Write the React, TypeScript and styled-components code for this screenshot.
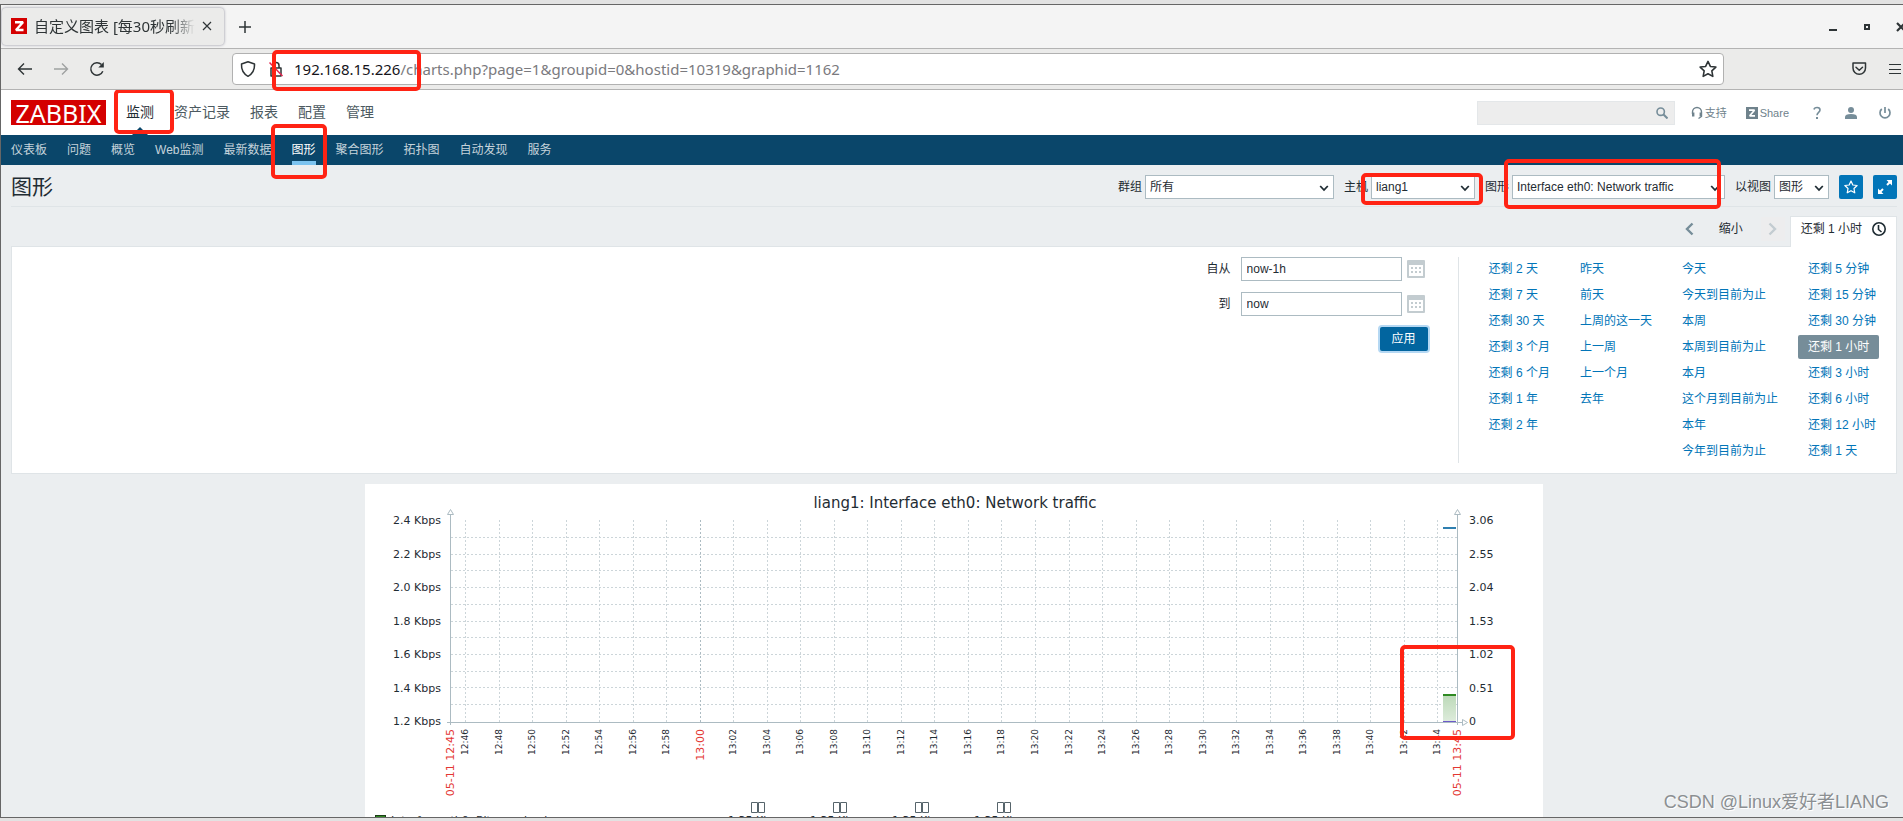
import React from "react";
import styled, { createGlobalStyle, css } from "styled-components";

const sans = '"Liberation Sans", "Noto Sans CJK SC", sans-serif';
const browserSans = '"Noto Sans", "Noto Sans CJK SC", sans-serif';
const chartSans = '"DejaVu Sans", "Noto Sans CJK SC", sans-serif';

const GlobalStyle = createGlobalStyle`
  *, *::before, *::after { box-sizing: border-box; }
  body { margin: 0; background: #ebebeb; }
  button, input, select { font: inherit; color: inherit; margin: 0; }
  svg { display: block; flex: none; }
`;

/* ---------- window ---------- */

const Desktop = styled.div`
  position: relative;
  height: 100vh;
  padding: 4px 0 3px;
  background: #e2e2e2;
  overflow: hidden;
  font: 12px/16px ${sans};
  color: #1f2c33;
`;

const Window = styled.div`
  height: 100%;
  display: flex;
  flex-direction: column;
  overflow: hidden;
  border: solid #666;
  border-width: 1px 0 1px 1px;
`;

const TabStrip = styled.div`
  flex: none;
  height: 44px;
  display: flex;
  align-items: center;
  gap: 15px;
  padding: 0 0 0 1px;
  background: #f4f4f4;
  border-bottom: 1px solid #b3b3b3;
  overflow: hidden;
`;

const BrowserTab = styled.div`
  width: 222px;
  height: 37px;
  display: flex;
  align-items: center;
  gap: 7px;
  padding: 0 12px 2px 9px;
  border-radius: 4px;
  background: #ebebea;
  box-shadow: 0 0 3px #8a8a99;
  color: #2e3436;
  font: 15px/20px ${browserSans};
`;

const TabTitle = styled.span`
  flex: 1;
  min-width: 0;
  overflow: hidden;
  white-space: nowrap;
  mask-image: linear-gradient(90deg, #000 85%, transparent);
`;

const PlainButton = styled.button<{ $faded?: boolean }>`
  padding: 0;
  border: 0;
  background: none;
  display: flex;
  color: #2e3436;
  opacity: ${(p) => (p.$faded ? 0.4 : 1)};
`;

const WindowButtons = styled.div`
  margin-left: auto;
  margin-right: -4px;
  display: flex;
  gap: 22px;
`;

const Toolbar = styled.div`
  flex: none;
  height: 41px;
  display: grid;
  grid-template-columns: 231px minmax(0, 1fr) 179px;
  align-items: center;
  background: #ebebea;
  border-bottom: 1px solid #b3b3b3;
`;

const NavButtons = styled.div`
  display: flex;
  gap: 20px;
  padding-left: 16px;
`;

const UrlBox = styled.div`
  position: relative;
  height: 32px;
  display: flex;
  align-items: center;
  padding: 0 6px;
  background: #fff;
  border: 1px solid #b1b1b1;
  border-radius: 4px;
  font: 15px/20px ${browserSans};
  color: #7a7a7e;
`;

const UrlIcons = styled.div`
  display: flex;
  gap: 10px;
  margin-right: 9px;
`;

const UrlHost = styled.label`
  color: #15141a;
`;

const UrlInput = styled.input`
  flex: 1;
  min-width: 0;
  border: 0;
  padding: 0;
  outline: 0;
  background: none;
`;

const ToolButtons = styled.div`
  display: flex;
  justify-content: flex-end;
  gap: 20px;
`;

/* Red frame that points at a part of the page */
const Mark = styled.span<{ $x: number; $y: number; $w: number; $h: number }>`
  position: absolute;
  z-index: 5;
  left: ${(p) => p.$x}px;
  top: ${(p) => p.$y}px;
  width: ${(p) => p.$w}px;
  height: ${(p) => p.$h}px;
  border: 4px solid #ff2314;
  border-radius: 5px;
  pointer-events: none;
`;

/* ---------- Zabbix header ---------- */

const Page = styled.div`
  flex: 1;
  min-height: 0;
  overflow: hidden;
  background: #ebeef0;
`;

const Header = styled.header`
  height: 45px;
  display: flex;
  align-items: center;
  padding: 0 12px 0 10px;
  background: #fff;
`;

const Logo = styled.a`
  width: 95px;
  height: 25px;
  margin-right: 20px;
  background: #d40000;
  color: #fff;
  text-align: center;
  text-decoration: none;
  font: 25px/26px ${browserSans};
`;

const MainMenu = styled.nav`
  display: flex;
  gap: 20px;
`;

const MainLink = styled.a<{ $active?: boolean }>`
  position: relative;
  height: 45px;
  font-size: 14px;
  line-height: 45px;
  text-decoration: none;
  color: ${(p) => (p.$active ? "#1f2c33" : "#4c5a61")};
  ${(p) =>
    p.$active &&
    css`
      &::after {
        content: "";
        position: absolute;
        left: 50%;
        bottom: 0;
        margin-left: -8px;
        border: 8px solid transparent;
        border-top-width: 0;
        border-bottom-color: #0a466a;
      }
    `}
`;

const HeaderTools = styled.div`
  margin-left: auto;
  display: flex;
  align-items: center;
  gap: 22px;
  color: #6f828c;
`;

const SearchForm = styled.form`
  width: 198px;
  height: 24px;
  margin-right: -3px;
  display: flex;
  align-items: center;
  padding-right: 6px;
  background: #ededed;
  border: 1px solid #e4e7e9;
`;

const SearchInput = styled.input`
  flex: 1;
  min-width: 0;
  border: 0;
  background: none;
  outline: 0;
`;

const IconButton = styled(PlainButton)`
  color: #768d99;
`;

const HeaderLink = styled.a`
  display: flex;
  align-items: center;
  gap: 2px;
  margin-left: -3px;
  font-size: 11px;
  color: inherit;
  text-decoration: none;
`;

const SubMenu = styled.nav`
  height: 30px;
  display: flex;
  gap: 20px;
  padding: 0 10px;
  background: #0a466a;
`;

const SubLink = styled.a<{ $active?: boolean }>`
  position: relative;
  line-height: 31px;
  text-decoration: none;
  color: ${(p) => (p.$active ? "#fff" : "#c5d3db")};
  box-shadow: ${(p) => (p.$active ? "inset 0 -4px #7bc3f0" : "none")};
`;

/* ---------- page title and filters ---------- */

const Content = styled.main`
  padding: 0 6px 0 10px;
`;

const TitleRow = styled.div`
  height: 42px;
  display: flex;
  align-items: center;
  justify-content: space-between;
  padding-top: 3px;
  border-bottom: 1px solid #dfe4e7;
`;

const Title = styled.h1`
  margin: 0;
  font-weight: 400;
  font-size: 21px;
  line-height: 24px;
`;

const Controls = styled.div`
  display: flex;
  align-items: center;
  gap: 10px;
`;

const Field = styled.label`
  display: flex;
  align-items: center;
  gap: 3px;
`;

const SelectBox = styled.span<{ $w: number }>`
  position: relative;
  width: ${(p) => p.$w}px;
  height: 24px;

  > svg {
    position: absolute;
    right: 5px;
    top: 8px;
    pointer-events: none;
  }
`;

const Select = styled.select`
  appearance: none;
  width: 100%;
  height: 24px;
  padding: 0 4px;
  border: 1px solid #acbbc2;
  border-radius: 0;
  background: #fff;
`;

const BlueButton = styled.button`
  width: 24px;
  height: 24px;
  display: flex;
  align-items: center;
  justify-content: center;
  padding: 0;
  border: 0;
  border-radius: 2px;
  background: #0275b8;
  color: #fff;
`;

const TimeBar = styled.div`
  height: 39px;
  display: flex;
  align-items: flex-end;
  justify-content: flex-end;
`;

const StepButton = styled.button<{ $off?: boolean }>`
  width: 24px;
  height: 24px;
  margin: 0 0 5px;
  display: flex;
  align-items: center;
  justify-content: center;
  padding: 0;
  border: 0;
  background: ${(p) => (p.$off ? "#ededee" : "none")};
  color: ${(p) => (p.$off ? "#c3ccd1" : "#768d99")};
`;

const ZoomOut = styled(StepButton)`
  margin: 0 18px 5px;
  color: #1f2c33;
`;

const TimeTab = styled.a`
  position: relative;
  height: 31px;
  display: flex;
  align-items: center;
  gap: 10px;
  margin: 0 0 -1px 5px;
  padding: 0 10px 6px;
  background: #fff;
  border: 1px solid #dfe4e7;
  border-bottom: 0;
  color: inherit;
  text-decoration: none;
`;

const Panel = styled.section`
  display: flex;
  justify-content: flex-end;
  padding: 10px;
  background: #fff;
  border: 1px solid #dfe4e7;
`;

const RangeForm = styled.form`
  display: grid;
  grid-template-columns: auto 161px 18px;
  column-gap: 5px;
  row-gap: 11px;
  align-content: start;
  align-items: center;
  padding-right: 33px;
`;

const RangeLabel = styled.label`
  text-align: right;
  margin-right: 5px;
`;

const RangeInput = styled.input`
  width: 161px;
  height: 24px;
  padding: 0 5px;
  border: 1px solid #acbbc2;
`;

const ApplyButton = styled.button`
  grid-column: 1 / -1;
  justify-self: end;
  width: 48px;
  height: 24px;
  margin-right: -3px;
  border: 0;
  padding: 0;
  border-radius: 2px;
  background: #02659f;
  box-shadow: 0 0 0 2px #b5d8f3;
  color: #fff;
`;

const Presets = styled.div`
  display: flex;
  gap: 10px;
  padding-left: 20px;
  border-left: 1px solid #dfe4e7;
`;

const PresetList = styled.ul`
  margin: 0;
  padding: 0;
  list-style: none;
  display: flex;
  flex-direction: column;
  align-items: flex-start;
  gap: 2px;
`;

const Preset = styled.a<{ $active?: boolean }>`
  display: block;
  height: 24px;
  padding: 0 10px;
  border-radius: 2px;
  line-height: 24px;
  white-space: nowrap;
  text-decoration: none;
  color: ${(p) => (p.$active ? "#fff" : "#0275b8")};
  background: ${(p) => (p.$active ? "#768d99" : "none")};
`;

const ChartBox = styled.figure`
  position: relative;
  width: 1178px;
  margin: 10px auto 0;
  background: #fff;
`;

const Watermark = styled.div`
  position: absolute;
  right: 14px;
  bottom: 7px;
  font: 18px/24px ${sans};
  color: #8b8f92;
  text-shadow: 1px 1px 0 #fff;
`;

/* ---------- icons ---------- */

const line = { fill: "none", stroke: "currentColor" } as const;

const Chevron = () => (
  <svg width="10" height="10" viewBox="0 0 10 10" {...line} strokeWidth="1.8">
    <path d="M1.2 3 5 7l3.8-4" />
  </svg>
);

const STAR = "m8 1.2 2.1 4.5 4.9.6-3.6 3.4.9 4.900L8 12.200l-4.300 2.400.9-4.900L1 6.300l4.900-.6z";

const Star = ({ size }: { size: number }) => (
  <svg width={size} height={size} viewBox="0 0 16 16" {...line} strokeWidth="1.4" strokeLinejoin="round">
    <path d={STAR} />
  </svg>
);

const Calendar = () => (
  <svg width="18" height="18" viewBox="0 0 18 18">
    <rect width="18" height="18" rx="1" fill="#c3ccd0" />
    <rect x="2" y="5" width="14" height="11" fill="#fff" />
    {[4, 8, 12].map((x) => [7, 11].map((y) => <rect key={`${x}-${y}`} x={x} y={y} width="2" height="2" fill="#c3ccd0" />))}
  </svg>
);

/* ---------- data ---------- */

const subMenu = ["仪表板", "问题", "概览", "Web监测", "最新数据", "图形", "聚合图形", "拓扑图", "自动发现", "服务"];

const presets = [
  ["还剩 2 天", "还剩 7 天", "还剩 30 天", "还剩 3 个月", "还剩 6 个月", "还剩 1 年", "还剩 2 年"],
  ["昨天", "前天", "上周的这一天", "上一周", "上一个月", "去年"],
  ["今天", "今天到目前为止", "本周", "本周到目前为止", "本月", "这个月到目前为止", "本年", "今年到目前为止"],
  ["还剩 5 分钟", "还剩 15 分钟", "还剩 30 分钟", "还剩 1 小时", "还剩 3 小时", "还剩 6 小时", "还剩 12 小时", "还剩 1 天"],
];

const leftScale = ["2.4 Kbps", "2.2 Kbps", "2.0 Kbps", "1.8 Kbps", "1.6 Kbps", "1.4 Kbps", "1.2 Kbps"];
const rightScale = ["3.06", "2.55", "2.04", "1.53", "1.02", "0.51", "0"];

const timeTicks = Array.from({ length: 30 }, (_, i) => {
  const minute = 46 + i * 2;
  const hour = 12 + Math.floor(minute / 60);
  return {
    x: 100.5 + Math.round(i * 33.53),
    label: `${hour}:${String(minute % 60).padStart(2, "0")}`,
    major: minute % 60 === 0,
  };
});

/* ---------- chart ---------- */

const TimeLabel = ({ x, text, major }: { x: number; text: string; major?: boolean }) => (
  <text
    transform={`translate(${Math.floor(x) + (major ? 4 : 3)} 245) rotate(-90)`}
    textAnchor="end"
    fontSize={major ? 11 : 9}
    fill={major ? "#e33734" : "#1f2c33"}
  >
    {text}
  </text>
);

const Chart = () => (
  <svg width="1178" height="350" viewBox="0 0 1178 350" fontFamily={chartSans} fontSize="11" fill="#1f2c33">
    <defs>
      <linearGradient id="bits" x1="0" y1="0" x2="0" y2="1">
        <stop offset="0" stopColor="#bcd9b8" />
        <stop offset="1" stopColor="#deecdc" />
      </linearGradient>
    </defs>
    <text x="590" y="24" fontSize="15" textAnchor="middle">
      liang1: Interface eth0: Network traffic
    </text>
    <g stroke="#ccd5d9" strokeDasharray="2 2">
      {Array.from({ length: 11 }, (_, i) => {
        const y = Math.round(53 + i * 16.7) + 0.5;
        return <line key={i} x1="86" x2="1092" y1={y} y2={y} />;
      })}
      {timeTicks.map((t) => (
        <line key={t.label} x1={t.x} x2={t.x} y1="36" y2="238" stroke={t.major ? "#acbbc2" : undefined} />
      ))}
    </g>
    <rect x="1078" y="211" width="13" height="27" fill="url(#bits)" />
    <rect x="1078" y="210" width="13" height="2" fill="#2f8a22" />
    <rect x="1078" y="237" width="13" height="1" fill="#6c59c9" />
    <rect x="1078" y="43" width="13" height="2" fill="#2f7fb0" />
    <g fill="none" stroke="#acbbc2">
      <path d="M85.500 31V241M1092.500 31V241M82 238.500H1097" />
      <path fill="#fff" d="M82.500 30.500h6l-3-5zM1089.500 30.500h6l-3-5zM1097.500 235.500v6l5-3z" />
    </g>
    {leftScale.map((s, i) => (
      <text key={s} x="76" y={Math.round(40 + i * 33.5)} textAnchor="end">
        {s}
      </text>
    ))}
    {rightScale.map((s, i) => (
      <text key={s} x="1104" y={Math.round(40 + i * 33.5)}>
        {s}
      </text>
    ))}
    <TimeLabel x={85} text="05-11 12:45" major />
    {timeTicks.map((t) => (
      <TimeLabel key={t.label} x={t.x} text={t.label} major={t.major} />
    ))}
    <TimeLabel x={1092} text="05-11 13:45" major />
    <rect x="10.500" y="331.500" width="10" height="10" fill="#2f8a22" stroke="#1b3d16" />
    <text x="26" y="340">
      Interface eth0: Bits received
    </text>
    {[386, 468, 550, 632].map((x) => (
      <g key={x}>
        <path d={`M${x + 0.5} 318.500h6v10h-6zM${x + 7.5} 318.500h6v10h-6z`} fill="none" stroke="#56646b" />
        <text x={x + 32} y="340" textAnchor="end">
          1.35 Kbps
        </text>
      </g>
    ))}
  </svg>
);

/* ---------- page ---------- */

export default function App() {
  return (
    <Desktop>
      <GlobalStyle />
      <Window>
        <TabStrip>
          <BrowserTab>
            <svg width="16" height="16" viewBox="0 0 16 16">
              <rect width="16" height="16" fill="#d40000" />
              <path d="M4 4.200h8L5 12h7.500" fill="none" stroke="#fff" strokeWidth="2.400" strokeLinejoin="bevel" />
            </svg>
            <TabTitle>自定义图表 [每30秒刷新一次]</TabTitle>
            <PlainButton aria-label="关闭标签页">
              <svg width="10" height="10" viewBox="0 0 10 10" {...line} strokeWidth="1.200">
                <path d="m1 1 8 8M9 1 1 9" />
              </svg>
            </PlainButton>
          </BrowserTab>
          <PlainButton aria-label="新标签页">
            <svg width="12" height="12" viewBox="0 0 12 12" {...line} strokeWidth="1.500">
              <path d="M6 0v12M0 6h12" />
            </svg>
          </PlainButton>
          <WindowButtons>
            <PlainButton aria-label="最小化">
              <svg width="12" height="12" viewBox="0 0 12 12">
                <rect x="2" y="8" width="8" height="2" fill="currentColor" />
              </svg>
            </PlainButton>
            <PlainButton aria-label="最大化">
              <svg width="12" height="12" viewBox="0 0 12 12" {...line} strokeWidth="2">
                <path d="M4 4h4v4H4z" />
              </svg>
            </PlainButton>
            <PlainButton aria-label="关闭">
              <svg width="12" height="12" viewBox="0 0 12 12" {...line} strokeWidth="2.200">
                <path d="m2 2 8 8M10 2l-8 8" />
              </svg>
            </PlainButton>
          </WindowButtons>
        </TabStrip>

        <Toolbar>
          <NavButtons>
            <PlainButton aria-label="后退">
              <svg width="16" height="16" viewBox="0 0 16 16" {...line} strokeWidth="1.400">
                <path d="M15 8H1.500M7 2.500 1.500 8 7 13.500" />
              </svg>
            </PlainButton>
            <PlainButton aria-label="前进" $faded>
              <svg width="16" height="16" viewBox="0 0 16 16" {...line} strokeWidth="1.400">
                <path d="M1 8h13.500M9 2.500 14.500 8 9 13.500" />
              </svg>
            </PlainButton>
            <PlainButton aria-label="刷新">
              <svg width="16" height="16" viewBox="0 0 16 16" {...line} strokeWidth="1.500">
                <path d="M13.800 10.200A6.200 6.200 0 1 1 12.500 3.600" />
                <path d="M14.800 1v5.500H9.300z" fill="currentColor" stroke="none" />
              </svg>
            </PlainButton>
          </NavButtons>
          <UrlBox>
            <UrlIcons>
              <svg width="18" height="18" viewBox="0 0 18 18" {...line} strokeWidth="1.500" color="#2e3436">
                <path d="M9 1.800 15.500 4c.3 5.500-1.500 9.500-6.500 12.300C4 13.500 2.200 9.500 2.500 4z" strokeLinejoin="round" />
              </svg>
              <svg width="18" height="18" viewBox="0 0 18 18" {...line} strokeWidth="1.500" color="#2e3436">
                <path d="M6 8V5.500a3 3 0 0 1 6 0V8M4 8h10v8H4z" strokeLinejoin="round" />
                <path d="m2.500 2.500 13 13.500" stroke="#e22850" />
              </svg>
            </UrlIcons>
            <UrlHost htmlFor="url">192.168.15.226</UrlHost>
            <UrlInput id="url" defaultValue="/charts.php?page=1&groupid=0&hostid=10319&graphid=1162" />
            <PlainButton aria-label="收藏此页">
              <Star size={18} />
            </PlainButton>
            <Mark $x={39} $y={-4} $w={149} $h={41} />
          </UrlBox>
          <ToolButtons>
            <PlainButton aria-label="Pocket">
              <svg width="16" height="16" viewBox="0 0 16 16" {...line} strokeWidth="1.500" strokeLinejoin="round">
                <path d="M2 2h12.500v5a6.250 6.250 0 0 1-12.500 0z" />
                <path d="m5 6.200 3.250 3 3.250-3" strokeLinecap="round" />
              </svg>
            </PlainButton>
            <PlainButton aria-label="菜单">
              <svg width="16" height="16" viewBox="0 0 16 16" {...line}>
                <path d="M2 3.500h12M2 8.500h12M2 12.500h12" />
              </svg>
            </PlainButton>
          </ToolButtons>
        </Toolbar>

        <Page>
          <Header>
            <Logo href="#">ZABBIX</Logo>
            <MainMenu>
              <MainLink href="#" $active>
                监测
                <Mark $x={-12} $y={-1} $w={60} $h={45} />
              </MainLink>
              <MainLink href="#">资产记录</MainLink>
              <MainLink href="#">报表</MainLink>
              <MainLink href="#">配置</MainLink>
              <MainLink href="#">管理</MainLink>
            </MainMenu>
            <HeaderTools>
              <SearchForm>
                <SearchInput aria-label="搜索" />
                <IconButton type="button" aria-label="搜索">
                  <svg width="12" height="12" viewBox="0 0 12 12" {...line} strokeWidth="1.600">
                    <circle cx="4.700" cy="4.700" r="3.700" />
                    <path d="m7.300 7.300 4.200 4.200" strokeWidth="2" />
                  </svg>
                </IconButton>
              </SearchForm>
              <HeaderLink href="#">
                <svg width="12" height="14" viewBox="0 0 12 14" {...line} strokeWidth="1.400">
                  <path d="M1.500 8V6a4.500 4.500 0 0 1 9 0v4.500L7.500 12.500" />
                  <path d="M2.200 6.500v4M9.800 6.500v4" strokeWidth="2.400" />
                </svg>
                支持
              </HeaderLink>
              <HeaderLink href="#">
                <svg width="12" height="12" viewBox="0 0 12 12">
                  <rect width="12" height="12" fill="#6f828c" />
                  <path d="M3 3.200h5.500L3.700 8.800H9" fill="none" stroke="#fff" strokeWidth="1.700" strokeLinejoin="bevel" />
                </svg>
                Share
              </HeaderLink>
              <IconButton aria-label="帮助">
                <svg width="12" height="14" viewBox="0 0 12 14" {...line} strokeWidth="1.600">
                  <path d="M3 3.500C3.400 1 9 .6 9 4c0 2.500-3 2.300-3 5.300" />
                  <path d="M6 11v2" strokeWidth="2" />
                </svg>
              </IconButton>
              <IconButton aria-label="用户">
                <svg width="12" height="12" viewBox="0 0 12 12" fill="currentColor">
                  <circle cx="6" cy="3" r="3" />
                  <path d="M0 12V10c0-2 2-3 6-3s6 1 6 3v2z" />
                </svg>
              </IconButton>
              <IconButton aria-label="退出">
                <svg width="12" height="12" viewBox="0 0 12 12" {...line} strokeWidth="1.700">
                  <path d="M6 0v6M2.800 2a5 5 0 1 0 6.400 0" />
                </svg>
              </IconButton>
            </HeaderTools>
          </Header>

          <SubMenu>
            {subMenu.map((item) => (
              <SubLink key={item} href="#" $active={item === "图形"}>
                {item}
                {item === "图形" && <Mark $x={-21} $y={-11} $w={56} $h={55} />}
              </SubLink>
            ))}
          </SubMenu>

          <Content>
            <TitleRow>
              <Title>图形</Title>
              <Controls>
                <Field>
                  群组
                  <SelectBox $w={189}>
                    <Select>
                      <option>所有</option>
                    </Select>
                    <Chevron />
                  </SelectBox>
                </Field>
                <Field>
                  主机
                  <SelectBox $w={104}>
                    <Select>
                      <option>liang1</option>
                    </Select>
                    <Chevron />
                    <Mark $x={-10} $y={-2} $w={122} $h={32} />
                  </SelectBox>
                </Field>
                <Field>
                  图形
                  <SelectBox $w={213}>
                    <Select>
                      <option>Interface eth0: Network traffic</option>
                    </Select>
                    <Chevron />
                    <Mark $x={-8} $y={-16} $w={217} $h={50} />
                  </SelectBox>
                </Field>
                <Field>
                  以视图
                  <SelectBox $w={55}>
                    <Select>
                      <option>图形</option>
                    </Select>
                    <Chevron />
                  </SelectBox>
                </Field>
                <BlueButton aria-label="添加到收藏">
                  <Star size={14} />
                </BlueButton>
                <BlueButton aria-label="全屏">
                  <svg width="16" height="16" viewBox="0 0 16 16" {...line} strokeWidth="2">
                    <path d="m10 6 3-3M6 10l-3 3" />
                    <path d="M9.500 1H15v5.500zM1 9.500V15h5.500z" fill="currentColor" stroke="none" />
                  </svg>
                </BlueButton>
              </Controls>
            </TitleRow>

            <TimeBar>
              <StepButton aria-label="向前">
                <svg width="10" height="14" viewBox="0 0 10 14" {...line} strokeWidth="2.400">
                  <path d="M8.500 1.500 3 7l5.500 5.500" />
                </svg>
              </StepButton>
              <ZoomOut>缩小</ZoomOut>
              <StepButton aria-label="向后" $off>
                <svg width="10" height="14" viewBox="0 0 10 14" {...line} strokeWidth="2.400">
                  <path d="M1.500 1.500 7 7l-5.500 5.500" />
                </svg>
              </StepButton>
              <TimeTab href="#">
                还剩 1 小时
                <svg width="14" height="14" viewBox="0 0 14 14" {...line} strokeWidth="1.600">
                  <circle cx="7" cy="7" r="6.200" />
                  <path d="M6.500 3v4.500L9.500 10" />
                </svg>
              </TimeTab>
            </TimeBar>

            <Panel>
              <RangeForm>
                <RangeLabel htmlFor="from">自从</RangeLabel>
                <RangeInput id="from" defaultValue="now-1h" />
                <PlainButton type="button" aria-label="选择开始时间">
                  <Calendar />
                </PlainButton>
                <RangeLabel htmlFor="to">到</RangeLabel>
                <RangeInput id="to" defaultValue="now" />
                <PlainButton type="button" aria-label="选择结束时间">
                  <Calendar />
                </PlainButton>
                <ApplyButton type="button">应用</ApplyButton>
              </RangeForm>
              <Presets>
                {presets.map((column) => (
                  <PresetList key={column[0]}>
                    {column.map((p) => (
                      <li key={p}>
                        <Preset href="#" $active={p === "还剩 1 小时"}>
                          {p}
                        </Preset>
                      </li>
                    ))}
                  </PresetList>
                ))}
              </Presets>
            </Panel>

            <ChartBox>
              <Chart />
              <Mark $x={1035} $y={161} $w={115} $h={95} />
            </ChartBox>
          </Content>
        </Page>
      </Window>
      <Watermark>CSDN @Linux爱好者LIANG</Watermark>
    </Desktop>
  );
}
